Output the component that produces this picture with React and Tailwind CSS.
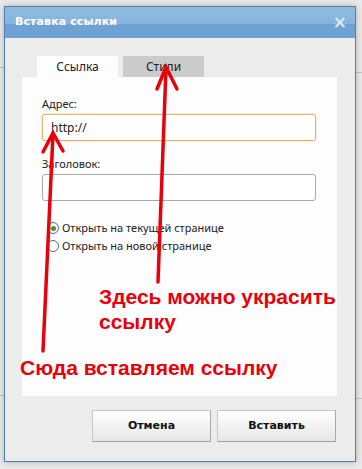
import React from "react";

function Radio({ checked, label }) {
  return (
    <label className="flex items-center gap-[3px] h-[18px]">
      <span className="w-[12px] h-[12px] rounded-full border border-[#4d6b8a] bg-white flex items-center justify-center">
        {checked && <span className="w-[5px] h-[5px] rounded-full bg-[#3a9a2c]" />}
      </span>
      <span>{label}</span>
    </label>
  );
}

function Arrows() {
  return (
    <svg
      className="absolute left-0 top-0 pointer-events-none"
      width="362"
      height="469"
      viewBox="0 0 362 469"
    >
      <g stroke="#e8000b" strokeWidth="3.5" strokeLinecap="round" fill="none">
        <path d="M43 351 L53 134" />
        <path d="M43 152 L53 133 L63 151" />
        <path d="M158 282 L166 68" />
        <path d="M157 89 L166 67 L177 89" />
      </g>
    </svg>
  );
}

export default function App() {
  return (
    <div className="relative w-[362px] h-[469px] bg-[#e9e9e9] overflow-hidden font-['Noto_Sans',sans-serif]">
      {/* страница позади окна */}
      <div className="absolute left-0 top-[67px] w-[6px] h-px bg-[#c4c4c4]" />
      <div className="absolute left-0 top-[395px] w-[6px] h-px bg-[#c4c4c4]" />
      <div className="absolute right-0 top-[72px] w-[8px] h-px bg-[#c4c4c4]" />
      <div className="absolute right-0 top-[398px] w-[8px] h-px bg-[#c4c4c4]" />

      <div className="relative ml-[4px] mt-[6px] w-[352px] h-[456px] border border-[#4f7fae] bg-[#ececec] shadow-[0_0_6px_rgba(0,0,0,0.25)] flex flex-col">
        {/* заголовок */}
        <div className="h-[31px] flex items-center justify-between pl-[10px] pr-[8px] bg-[linear-gradient(to_bottom,#8fbbe0_0%,#86b4dc_55%,#6ea2d2_56%,#6ea2d2_100%)]">
          <span className="text-white font-bold text-[11px] tracking-[0.1px] font-['DejaVu_Sans',sans-serif]">Вставка ссылки</span>
          <span className="text-[#dce8f5] font-bold text-[17px] leading-none font-['DejaVu_Sans',sans-serif]">×</span>
        </div>

        {/* вкладки */}
        <div className="flex gap-[5px] pl-[32px] mt-[18px]">
          <div className="w-[81px] h-[21px] bg-[#fdfdfd] flex items-center justify-center text-[12px] text-[#222]">
            Ссылка
          </div>
          <div className="w-[81px] h-[21px] bg-[#cbcbcb] flex items-center justify-center text-[12px] text-[#222]">
            Стили
          </div>
        </div>

        {/* панель */}
        <div className="ml-[17px] w-[315px] h-[319px] bg-[#fdfdfd] pl-[20px] pt-[17px] text-[11px] text-[#222]">
          <div className="h-[20px] flex items-center">Адрес:</div>
          <div className="w-[274px] h-[27px] rounded-[3px] border border-[#d8b668] shadow-[0_0_2px_rgba(216,182,104,0.6)] bg-white flex items-center pl-[8px] text-[12px]">
            http://
          </div>
          <div className="h-[20px] flex items-center mt-[13px]">Заголовок:</div>
          <div className="w-[274px] h-[27px] rounded-[3px] border border-[#a9a9a9] bg-white" />

          <div className="mt-[18px] pl-[5px] flex flex-col">
            <Radio checked label="Открыть на текущей странице" />
            <Radio label="Открыть на новой странице" />
          </div>

          <div className="mt-[29px] pl-[57px] font-['Liberation_Sans',sans-serif] font-bold text-[21px] leading-[25px] text-[#e8000b]">
            <div>Здесь можно украсить</div>
            <div>ссылку</div>
          </div>
          <div className="mt-[21px] -ml-[22px] font-['Liberation_Sans',sans-serif] font-bold text-[21px] leading-[25px] text-[#e8000b]">
            Сюда вставляем ссылку
          </div>
        </div>

        {/* кнопки */}
        <div className="flex justify-end gap-[6px] pr-[19px] mt-[14px] font-['DejaVu_Sans',sans-serif]">
          <button className="w-[119px] h-[32px] border border-[#c8c8c8] border-b-[#a0a0a0] border-r-[#a8a8a8] bg-[linear-gradient(to_bottom,#ffffff,#e6e6e6)] text-[11px] font-bold text-[#111]">
            Отмена
          </button>
          <button className="w-[119px] h-[32px] border border-[#c8c8c8] border-b-[#a0a0a0] border-r-[#a8a8a8] bg-[linear-gradient(to_bottom,#ffffff,#e6e6e6)] text-[11px] font-bold text-[#111]">
            Вставить
          </button>
        </div>
      </div>

      <Arrows />
    </div>
  );
}
